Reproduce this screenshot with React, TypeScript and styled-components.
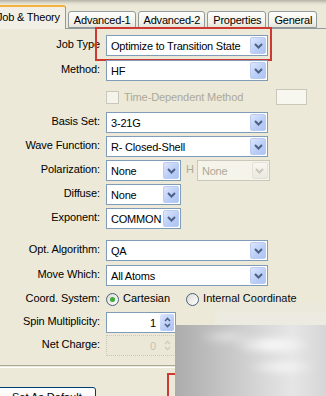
import React from 'react';
import styled, { createGlobalStyle } from 'styled-components';

const GlobalStyle = createGlobalStyle`
  html, body {
    margin: 0;
    padding: 0;
    background: #ECE9D8;
  }
  body {
    font-family: "Liberation Sans", Arial, sans-serif;
    font-size: 11px;
    color: #000;
  }
`;

const Window = styled.div`
  position: relative;
  width: 326px;
  height: 396px;
  overflow: hidden;
  background: #ECE9D8;
`;

const TopStrip = styled.div`
  height: 5px;
  background: linear-gradient(#b4b2a6, #dedbcc 60%, #ece9d8);
`;

const TabBar = styled.div`
  display: flex;
  align-items: flex-end;
  gap: 2px;
  height: 23px;
  margin-left: -9px;
  border-bottom: 1px solid #919b9c;
`;

const Tab = styled.div<{ active?: boolean }>`
  box-sizing: border-box;
  height: ${(p) => (p.active ? 24 : 17)}px;
  margin-bottom: ${(p) => (p.active ? -1 : 0)}px;
  padding: ${(p) => (p.active ? '0 5px 3px 5px' : '0 4px 0 5px')};
  display: flex;
  align-items: center;
  border: 1px solid #919b9c;
  border-bottom: ${(p) => (p.active ? 'none' : '1px solid #919b9c')};
  border-top: ${(p) => (p.active ? '2px solid #f3b33d' : '1px solid #919b9c')};
  border-radius: 3px 3px 0 0;
  background: ${(p) =>
    p.active ? '#f2f0e6' : 'linear-gradient(#fdfdfb, #f2f1ea 70%, #e6e4da)'};
  white-space: nowrap;
  letter-spacing: -0.2px;
`;

const Form = styled.div`
  display: flex;
  flex-direction: column;
  gap: 3px;
  padding-top: 6px;
`;

const Row = styled.div<{ space?: number; h?: number }>`
  position: relative;
  display: grid;
  grid-template-columns: 100px auto;
  column-gap: 6px;
  align-items: center;
  height: ${(p) => p.h ?? 21}px;
  margin-top: ${(p) => p.space ?? 0}px;
`;

const Label = styled.div`
  text-align: right;
  padding-bottom: 3px;
  white-space: nowrap;
  letter-spacing: -0.1px;
`;

const Controls = styled.div`
  display: flex;
  align-items: center;
  height: 100%;
`;

const SelectBox = styled.div<{ w: number; disabled?: boolean }>`
  box-sizing: border-box;
  width: ${(p) => p.w}px;
  height: 21px;
  padding: 1px;
  display: flex;
  align-items: stretch;
  border: 1px solid ${(p) => (p.disabled ? '#cac8bb' : '#7f9db9')};
  background: ${(p) => (p.disabled ? '#f5f4ea' : '#fff')};
  color: ${(p) => (p.disabled ? '#aca899' : '#000')};
`;

const SelectText = styled.span`
  flex: 1;
  display: flex;
  align-items: center;
  padding-left: 3px;
  white-space: nowrap;
  overflow: hidden;
  letter-spacing: -0.2px;
`;

const ArrowButton = styled.div<{ disabled?: boolean }>`
  width: 16px;
  display: flex;
  align-items: center;
  justify-content: center;
  border-radius: 2px;
  background: ${(p) =>
    p.disabled
      ? 'linear-gradient(#f7f6f0, #ebe9e0)'
      : 'linear-gradient(135deg, #dde6fd, #b9cdf7 60%, #aec4f3)'};
  border: 1px solid ${(p) => (p.disabled ? '#e4e2d8' : '#bccbf0')};
  box-sizing: border-box;
`;

const Chevron = ({ color = '#4d6185' }: { color?: string }) => (
  <svg width="9" height="6" viewBox="0 0 9 6">
    <path d="M1 1 L4.5 4.5 L8 1" fill="none" stroke={color} strokeWidth="2" />
  </svg>
);

const Select = ({ value, w = 162, disabled }: { value: string; w?: number; disabled?: boolean }) => (
  <SelectBox w={w} disabled={disabled}>
    <SelectText>{value}</SelectText>
    <ArrowButton disabled={disabled}>
      <Chevron color={disabled ? '#c9c7ba' : '#4d6185'} />
    </ArrowButton>
  </SelectBox>
);

const HLabel = styled.span`
  margin: 0 3px 0 5px;
  color: #aca899;
  padding-bottom: 3px;
`;

const CheckBox = styled.div`
  width: 13px;
  height: 13px;
  box-sizing: border-box;
  border: 1px solid #cac8bb;
  background: #f5f4ea;
`;

const DisabledText = styled.span`
  color: #aca899;
  margin-left: 5px;
  letter-spacing: -0.1px;
`;

const SmallBox = styled.div`
  box-sizing: border-box;
  width: 31px;
  height: 16px;
  margin-left: 33px;
  border: 1px solid #cac8bb;
  background: #f7f6ef;
`;

const Radio = styled.div<{ checked?: boolean }>`
  position: relative;
  width: 13px;
  height: 13px;
  box-sizing: border-box;
  border-radius: 50%;
  border: 1px solid #4a6079;
  background: linear-gradient(135deg, #dcdbd3, #fff);
  &::after {
    content: '';
    display: ${(p) => (p.checked ? 'block' : 'none')};
    position: absolute;
    left: 3px;
    top: 3px;
    width: 5px;
    height: 5px;
    border-radius: 50%;
    background: #3fa93a;
  }
`;

const RadioText = styled.span<{ gap?: number }>`
  margin-left: 4px;
  margin-right: ${(p) => p.gap ?? 0}px;
  padding-bottom: 2px;
`;

const SpinBox = styled.div<{ disabled?: boolean }>`
  box-sizing: border-box;
  width: 70px;
  height: 21px;
  padding: 1px;
  display: flex;
  border: 1px solid ${(p) => (p.disabled ? '#cac8bb' : '#7f9db9')};
  border-style: ${(p) => (p.disabled ? 'dotted' : 'solid')};
  background: ${(p) => (p.disabled ? '#ebe8d8' : '#fff')};
`;

const SpinValue = styled.span<{ disabled?: boolean }>`
  flex: 1;
  display: flex;
  align-items: center;
  justify-content: flex-end;
  padding-right: 4px;
  color: ${(p) => (p.disabled ? '#c6c3b3' : '#000')};
`;

const SpinButtons = styled.div<{ disabled?: boolean }>`
  width: 14px;
  display: flex;
  flex-direction: column;
  align-items: center;
  justify-content: center;
  gap: 1px;
  border-radius: 2px;
  background: ${(p) =>
    p.disabled ? '#ebe8d8' : 'linear-gradient(135deg, #dde6fd, #b9cdf7 60%, #aec4f3)'};
`;

const Spin = ({ value, disabled }: { value: string; disabled?: boolean }) => {
  const c = disabled ? '#d2cfc0' : '#4d6185';
  return (
    <SpinBox disabled={disabled}>
      <SpinValue disabled={disabled}>{value}</SpinValue>
      <SpinButtons disabled={disabled}>
        <svg width="7" height="5" viewBox="0 0 7 5">
          <path d="M1 4 L3.5 1.5 L6 4" fill="none" stroke={c} strokeWidth="1.6" />
        </svg>
        <svg width="7" height="5" viewBox="0 0 7 5">
          <path d="M1 1 L3.5 3.5 L6 1" fill="none" stroke={c} strokeWidth="1.6" />
        </svg>
      </SpinButtons>
    </SpinBox>
  );
};

const Separator = styled.div`
  margin-top: 9px;
  height: 1px;
  border-top: 1px solid #aca899;
  border-bottom: 1px solid #fff;
`;

const Button = styled.div`
  margin: 19px 0 0 -6px;
  box-sizing: border-box;
  width: 102px;
  height: 23px;
  padding-left: 17px;
  padding-bottom: 4px;
  border: 1px solid #003c74;
  border-radius: 3px;
  background: linear-gradient(#ffffff, #f4f3ee 80%, #d6d0c5);
  display: flex;
  align-items: center;
`;

const RedMark = styled.div<{ l: number; t: number; w: number; h: number }>`
  position: absolute;
  left: ${(p) => p.l}px;
  top: ${(p) => p.t}px;
  width: ${(p) => p.w}px;
  height: ${(p) => p.h}px;
  box-sizing: border-box;
  border: 2px solid #cd3a31;
  pointer-events: none;
`;

const SmudgeClip = styled.div`
  position: absolute;
  left: 175px;
  top: 325px;
  width: 151px;
  height: 71px;
  overflow: hidden;
`;

const Smudge = styled.div`
  margin: -8px;
  height: 90px;
  filter: blur(3px);
  background:
    radial-gradient(ellipse 40px 10px at 105px 28px, rgba(255, 255, 255, 0.95), transparent),
    radial-gradient(ellipse 35px 8px at 115px 50px, rgba(250, 250, 250, 0.85), transparent),
    radial-gradient(ellipse 30px 8px at 60px 20px, rgba(235, 235, 235, 0.7), transparent),
    linear-gradient(90deg, #a8a8a8, #bdbdbd 25%, #d6d6d6 55%, #e6e6e6 75%, #d2d2d2);
`;

const SmudgeHalo = styled.div`
  position: absolute;
  left: 215px;
  top: 298px;
  width: 115px;
  height: 30px;
  filter: blur(2px);
  background: linear-gradient(rgba(245, 244, 238, 0), rgba(236, 236, 230, 0.9));
`;

export default function App() {
  return (
    <Window>
      <GlobalStyle />
      <TopStrip />
      <TabBar>
        <Tab active>Job &amp; Theory</Tab>
        <Tab>Advanced-1</Tab>
        <Tab>Advanced-2</Tab>
        <Tab>Properties</Tab>
        <Tab>General</Tab>
      </TabBar>

      <Form>
        <Row>
          <Label>Job Type</Label>
          <Controls>
            <Select value="Optimize to Transition State" />
          </Controls>
          <RedMark l={95} t={-8} w={177} h={34} />
        </Row>
        <Row space={1}>
          <Label>Method:</Label>
          <Controls>
            <Select value="HF" />
          </Controls>
        </Row>
        <Row space={4} h={18}>
          <span />
          <Controls>
            <CheckBox />
            <DisabledText>Time-Dependent Method</DisabledText>
            <SmallBox />
          </Controls>
        </Row>
        <Row space={3}>
          <Label>Basis Set:</Label>
          <Controls>
            <Select value="3-21G" />
          </Controls>
        </Row>
        <Row>
          <Label>Wave Function:</Label>
          <Controls>
            <Select value="R- Closed-Shell" />
          </Controls>
        </Row>
        <Row>
          <Label>Polarization:</Label>
          <Controls>
            <Select value="None" w={75} />
            <HLabel>H</HLabel>
            <Select value="None" w={73} disabled />
          </Controls>
        </Row>
        <Row>
          <Label>Diffuse:</Label>
          <Controls>
            <Select value="None" w={75} />
          </Controls>
        </Row>
        <Row>
          <Label>Exponent:</Label>
          <Controls>
            <Select value="COMMON" w={75} />
          </Controls>
        </Row>
        <Row space={8}>
          <Label>Opt. Algorithm:</Label>
          <Controls>
            <Select value="QA" />
          </Controls>
        </Row>
        <Row space={1}>
          <Label>Move Which:</Label>
          <Controls>
            <Select value="All Atoms" />
          </Controls>
        </Row>
        <Row space={1} h={18}>
          <Label>Coord. System:</Label>
          <Controls>
            <Radio checked />
            <RadioText gap={16}>Cartesian</RadioText>
            <Radio />
            <RadioText>Internal Coordinate</RadioText>
          </Controls>
        </Row>
        <Row space={1}>
          <Label>Spin Multiplicity:</Label>
          <Controls>
            <Spin value="1" />
          </Controls>
        </Row>
        <Row space={-1}>
          <Label>Net Charge:</Label>
          <Controls>
            <Spin value="0" disabled />
          </Controls>
        </Row>
      </Form>

      <Separator />
      <Button>Set As Default</Button>

      <RedMark l={167} t={373} w={90} h={40} />
      <SmudgeHalo />
      <SmudgeClip>
        <Smudge />
      </SmudgeClip>
    </Window>
  );
}
